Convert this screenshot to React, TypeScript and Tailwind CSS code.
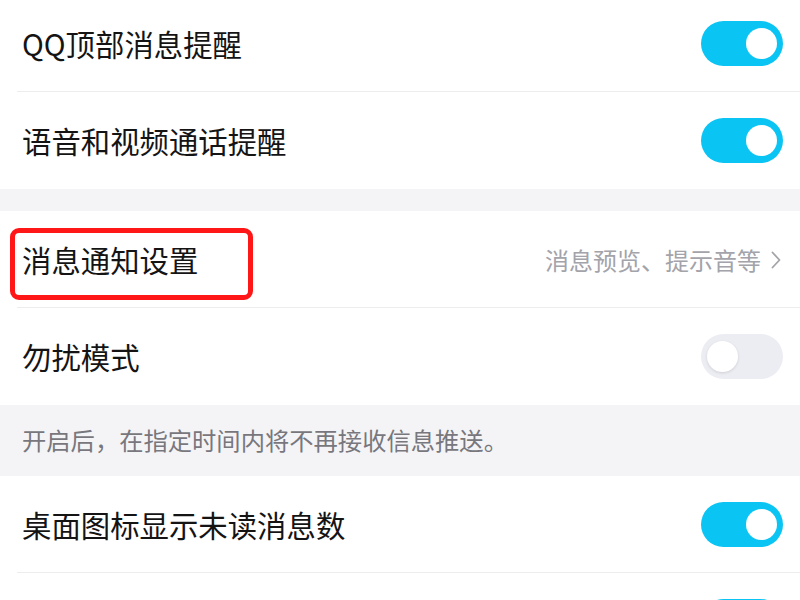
import React from 'react';

const font = { fontFamily: '"Noto Sans CJK SC", "Noto Sans", sans-serif' };

const Toggle = ({ on }: { on: boolean }) =>
  on ? (
    <div className="w-[82px] h-[45px] rounded-full bg-[#0ac4f4] flex items-center justify-end pr-[6px]">
      <div className="w-[31px] h-[31px] rounded-full bg-white" />
    </div>
  ) : (
    <div className="w-[82px] h-[45px] rounded-full bg-[#ececf3] flex items-center pl-[6px]">
      <div className="w-[31px] h-[31px] rounded-full bg-white shadow-[0_1px_3px_rgba(0,0,0,0.12)]" />
    </div>
  );

const Row = ({
  label,
  right,
  divider = true,
  children,
}: {
  label: string;
  right: React.ReactNode;
  divider?: boolean;
  children?: React.ReactNode;
}) => (
  <div className="relative bg-white h-[97px] pl-[22px] pr-[17px] flex items-center justify-between">
    <span className="text-[29.4px] text-[#141414] leading-none">{label}</span>
    {right}
    {divider && <div className="absolute left-[17px] right-0 bottom-0 h-px bg-[#ededef]" />}
    {children}
  </div>
);

export default function App() {
  return (
    <div className="w-[800px] h-[600px] overflow-hidden bg-[#f4f4f6]" style={font}>
      <div className="-mt-[5px]">
        <Row label="QQ顶部消息提醒" right={<Toggle on />} />
        <Row label="语音和视频通话提醒" right={<Toggle on />} divider={false} />
        <div className="h-[22px]" />
        <Row
          label="消息通知设置"
          right={
            <div className="flex items-center gap-[10px] pr-[2px]">
              <span className="text-[24px] text-[#a3a3aa] leading-none">消息预览、提示音等</span>
              <svg width="10" height="18" viewBox="0 0 10 18" fill="none">
                <path d="M1.5 1.5 L8.5 9 L1.5 16.5" stroke="#a3a3aa" strokeWidth="1.8" strokeLinecap="round" strokeLinejoin="round" />
              </svg>
            </div>
          }
        >
          <div className="absolute left-[10px] top-[17px] w-[243px] h-[72px] border-[5px] border-[#ff1717] rounded-[9px]" />
        </Row>
        <Row label="勿扰模式" right={<Toggle on={false} />} divider={false} />
        <div className="h-[71px] pl-[22px] flex items-center">
          <span className="text-[24.3px] text-[#77777d] leading-none">开启后，在指定时间内将不再接收信息推送。</span>
        </div>
        <Row label="桌面图标显示未读消息数" right={<Toggle on />} />
        <Row label="" right={<Toggle on />} />
      </div>
    </div>
  );
}
